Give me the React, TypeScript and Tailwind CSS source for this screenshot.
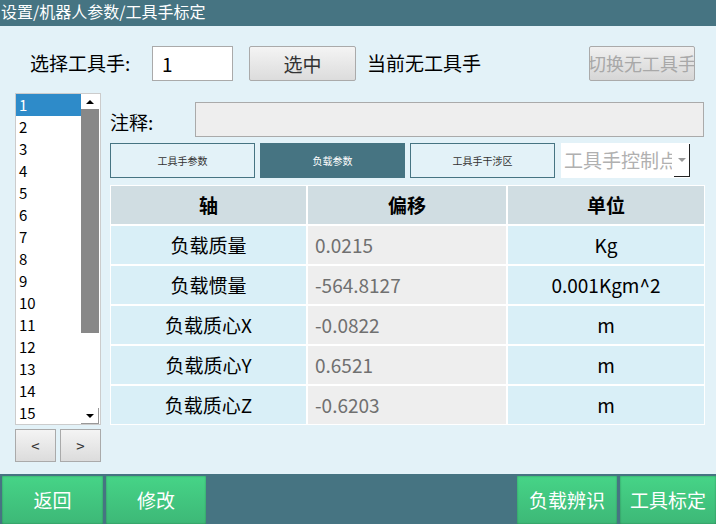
import React from "react";

const F = { fontFamily: '"Noto Sans CJK SC", "Noto Sans", sans-serif' };

const rows = [
  ["负载质量", "0.0215", "Kg"],
  ["负载惯量", "-564.8127", "0.001Kgm^2"],
  ["负载质心X", "-0.0822", "m"],
  ["负载质心Y", "0.6521", "m"],
  ["负载质心Z", "-0.6203", "m"],
];

function GreenBtn({ label, w }: { label: string; w: string }) {
  return (
    <div
      className={`${w} h-[48px] flex items-center justify-center text-white text-[19px] bg-gradient-to-b from-[#46d487] to-[#3db877] shadow-[inset_0_0_2px_rgba(0,0,0,0.35)]`}
    >
      {label}
    </div>
  );
}

export default function App() {
  const items = Array.from({ length: 15 }, (_, i) => i + 1);
  return (
    <div style={F} className="w-[716px] h-[524px] bg-[#e3f2f8] flex flex-col overflow-hidden text-black">
      <div className="h-[26px] bg-[#467482] text-white text-[16px] leading-[22px] pl-[1px]">
        设置/机器人参数/工具手标定
      </div>
      <div className="flex-1 relative">
        {/* top row */}
        <div className="flex items-center h-[35px] mt-[20px]">
          <div className="ml-[30px] text-[19px] w-[122px]">选择工具手:</div>
          <div className="w-[81px] h-[35px] bg-white border border-[#aaaaaa] text-[19px] leading-[33px] pl-[9px]">1</div>
          <div className="ml-[16px] w-[107px] h-[35px] border border-[#aaaaaa] rounded-[2px] bg-gradient-to-b from-[#f4f4f4] to-[#dcdcdc] text-[19px] leading-[33px] text-center text-[#333]">
            选中
          </div>
          <div className="ml-[11px] text-[19px]">当前无工具手</div>
          <div className="ml-auto mr-[21px] w-[106px] h-[35px] border border-[#aaaaaa] rounded-[2px] bg-gradient-to-b from-[#f0f0f0] to-[#d6d6d6] text-[18px] leading-[33px] text-[#a8a8a8] overflow-hidden whitespace-nowrap flex justify-center">
            <span className="shrink-0">切换无工具手</span>
          </div>
        </div>
        <div className="flex mt-[12px]">
          {/* left list */}
          <div className="ml-[15px] w-[86px] flex flex-col">
            <div className="h-[332px] bg-white border border-[#cccccc] flex">
              <div className="w-[65px] flex flex-col">
                {items.map((n) => (
                  <div
                    key={n}
                    className={`h-[22px] leading-[22px] pl-[3px] text-[15px] ${n === 1 ? "bg-[#2e8bc9] text-white" : ""}`}
                  >
                    {n}
                  </div>
                ))}
              </div>
              <div className="w-[18px] flex flex-col bg-white">
                <div className="h-[15px] flex items-center justify-center">
                  <div className="w-0 h-0 border-l-[4px] border-r-[4px] border-b-[4px] border-l-transparent border-r-transparent border-b-black" />
                </div>
                <div className="h-[224px] bg-[#888888]" />
                <div className="flex-1" />
                <div className="h-[16px] flex items-center justify-center border-r border-b border-[#999]">
                  <div className="w-0 h-0 border-l-[4px] border-r-[4px] border-t-[4px] border-l-transparent border-r-transparent border-t-black" />
                </div>
              </div>
            </div>
            <div className="flex gap-[4px] mt-[4px]">
              <div className="w-[41px] h-[33px] border border-[#aaaaaa] bg-gradient-to-b from-[#f4f4f4] to-[#dcdcdc] text-center leading-[31px] text-[15px] text-[#333]">&lt;</div>
              <div className="w-[41px] h-[33px] border border-[#aaaaaa] bg-gradient-to-b from-[#f4f4f4] to-[#dcdcdc] text-center leading-[31px] text-[15px] text-[#333]">&gt;</div>
            </div>
          </div>
          {/* right */}
          <div className="ml-[9px] w-[594px] flex flex-col mt-[9px]">
            <div className="flex items-center h-[35px]">
              <div className="w-[85px] text-[19px] pt-[6px]">注释:</div>
              <div className="w-[510px] h-[35px] bg-[#eeeeee] border border-[#aaaaaa]" />
            </div>
            <div className="flex mt-[6px] h-[35px]">
              <div className="w-[145px] h-[35px] border border-[#467482] flex items-center justify-center text-[10px] text-[#333]">工具手参数</div>
              <div className="ml-[5px] w-[145px] h-[35px] bg-[#467482] flex items-center justify-center text-[10px] text-white">负载参数</div>
              <div className="ml-[5px] w-[145px] h-[35px] border border-[#467482] flex items-center justify-center text-[10px] text-[#333]">工具手干涉区</div>
              <div className="ml-[6px] w-[129px] h-[35px] bg-white flex items-center relative">
                <span className="pl-[3px] text-[19px] text-[#b0b0b0] whitespace-nowrap overflow-hidden w-[111px]">工具手控制点</span>
                <div className="absolute right-0 top-[1px] w-[16px] h-[33px] border-r border-b border-[#222] flex items-center justify-center">
                  <div className="w-0 h-0 border-l-[4px] border-r-[4px] border-t-[4px] border-l-transparent border-r-transparent border-t-[#999]" />
                </div>
              </div>
            </div>
            <div className="mt-[7px] w-[595px] bg-white flex flex-col gap-[2px] p-[1px] pr-0">
              <div className="flex gap-[2px] h-[38px]">
                <div className="w-[195px] bg-[#d0dde2] flex items-center justify-center font-bold text-[19px]">轴</div>
                <div className="w-[198px] bg-[#d0dde2] flex items-center justify-center font-bold text-[19px]">偏移</div>
                <div className="w-[196px] bg-[#d0dde2] flex items-center justify-center font-bold text-[19px]">单位</div>
              </div>
              {rows.map((r) => (
                <div key={r[0]} className="flex gap-[2px] h-[38px]">
                  <div className="w-[195px] bg-[#d9eff7] flex items-center justify-center text-[19px]">{r[0]}</div>
                  <div className="w-[198px] bg-[#eeeeee] flex items-center pl-[7px] text-[19px] text-[#707070]">{r[1]}</div>
                  <div className="w-[196px] bg-[#d9eff7] flex items-center justify-center text-[19px]">{r[2]}</div>
                </div>
              ))}
            </div>
          </div>
        </div>
      </div>
      <div className="h-[50px] bg-[#467482] flex items-end pb-0 pt-[2px]">
        <div className="ml-[2px]"><GreenBtn label="返回" w="w-[101px]" /></div>
        <div className="ml-[3px]"><GreenBtn label="修改" w="w-[100px]" /></div>
        <div className="ml-auto"><GreenBtn label="负载辨识" w="w-[100px]" /></div>
        <div className="ml-[3px]"><GreenBtn label="工具标定" w="w-[96px]" /></div>
      </div>
    </div>
  );
}
